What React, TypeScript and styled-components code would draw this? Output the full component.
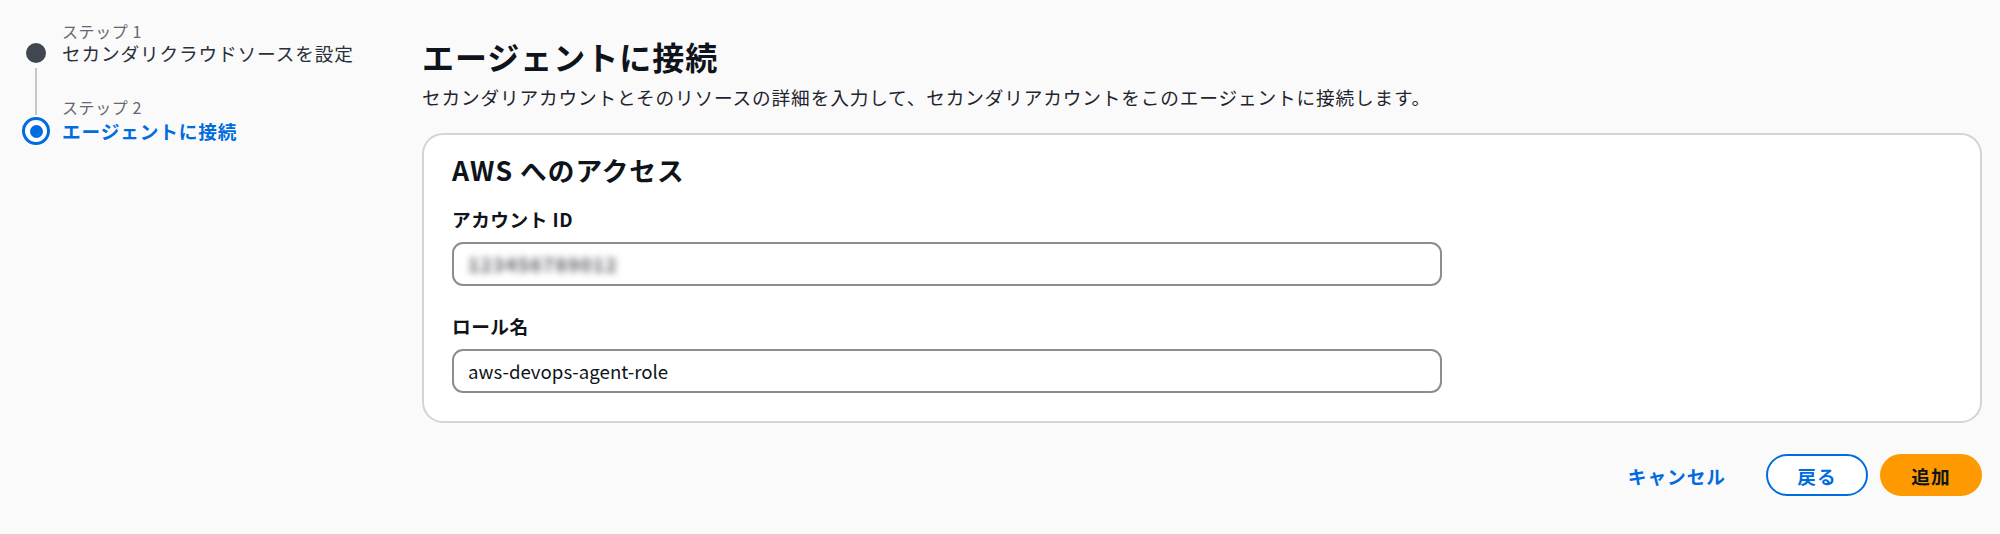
import React from 'react';
import styled, { createGlobalStyle, css } from 'styled-components';

const BLUE = '#006ce0';
const INK = '#0f141a';

const GlobalStyle = createGlobalStyle`
  html, body {
    margin: 0;
    padding: 0;
    background: #fafafa;
  }
  body {
    font-family: "Noto Sans CJK JP", "Open Sans", "Noto Sans", sans-serif;
    color: ${INK};
    -webkit-font-smoothing: antialiased;
  }
`;

const Page = styled.div`
  display: flex;
  gap: 20px;
  padding: 0 18px 0 20px;
  min-height: 534px;
  box-sizing: border-box;
`;

/* ---------- wizard steps ---------- */

const Sidebar = styled.nav`
  flex: 0 0 382px;
  padding-top: 21px;
`;

const Steps = styled.div`
  display: grid;
  grid-template-columns: 32px 1fr;
  grid-template-rows: 20px 24px 52px 28px;
  column-gap: 10px;
`;

const StepCaption = styled.span<{ $row: number }>`
  grid-column: 2;
  grid-row: ${(p) => p.$row};
  align-self: end;
  font-size: 16px;
  line-height: 20px;
  color: #656871;
  letter-spacing: 0.6px;
`;

const StepTitle = styled.span<{ $row: number; $active?: boolean }>`
  grid-column: 2;
  grid-row: ${(p) => p.$row};
  align-self: center;
  font-size: 18.67px;
  line-height: 24px;
  letter-spacing: 0.85px;
  color: #2a303a;
  white-space: nowrap;
  ${(p) =>
    p.$active &&
    css`
      color: ${BLUE};
      font-weight: 700;
    `}
`;

const StepDot = styled.span<{ $row: number; $active?: boolean }>`
  grid-column: 1;
  grid-row: ${(p) => p.$row};
  justify-self: center;
  align-self: center;
  box-sizing: border-box;
  border-radius: 50%;
  width: 20px;
  height: 20px;
  background: #414750;
  ${(p) =>
    p.$active &&
    css`
      width: 28px;
      height: 28px;
      background: #fff;
      border: 3px solid ${BLUE};
      display: flex;
      align-items: center;
      justify-content: center;
      &::after {
        content: '';
        width: 13px;
        height: 13px;
        border-radius: 50%;
        background: ${BLUE};
      }
    `}
`;

const StepLine = styled.span`
  grid-column: 1;
  grid-row: 3;
  justify-self: center;
  width: 2px;
  margin: 3px 0 2px;
  background: #c6c6cd;
`;

/* ---------- main form ---------- */

const Main = styled.main`
  flex: 1;
  display: flex;
  flex-direction: column;
  padding-top: 36px;
`;

const Heading = styled.h1`
  margin: 0;
  font-size: 32px;
  line-height: 40px;
  font-weight: 700;
  letter-spacing: 1px;
  color: ${INK};
`;

const Description = styled.p`
  margin: 8px 0 0;
  font-size: 18.67px;
  line-height: 26px;
  letter-spacing: 0.85px;
  color: #1f252e;
`;

const Card = styled.section`
  margin-top: 23px;
  background: #fff;
  border: 2px solid #d3d3d8;
  border-radius: 21px;
  padding: 18px 28px 28px;
  display: flex;
  flex-direction: column;
`;

const CardTitle = styled.h2`
  margin: 0 0 20px;
  font-size: 26.67px;
  line-height: 34px;
  font-weight: 700;
  letter-spacing: 1px;
`;

const Field = styled.div`
  display: flex;
  flex-direction: column;
  gap: 11px;
  & + & {
    margin-top: 28px;
  }
`;

const Label = styled.label`
  font-size: 18.67px;
  line-height: 24px;
  font-weight: 700;
  letter-spacing: 0.5px;
`;

const TextBox = styled.div`
  box-sizing: border-box;
  width: 990px;
  height: 44px;
  border: 2px solid #8c8c94;
  border-radius: 11px;
  background: #fff;
  padding: 0 14px;
  display: flex;
  align-items: center;
  overflow: hidden;
`;

// account numbers are shown smudged so they can't be read off the form
const Value = styled.span<{ $masked?: boolean }>`
  font-size: 18.67px;
  line-height: 24px;
  color: ${INK};
  ${(p) =>
    p.$masked &&
    css`
      color: #55565e;
      font-weight: 700;
      letter-spacing: 1.5px;
      filter: blur(3.5px);
      user-select: none;
    `}
`;

const Actions = styled.div`
  display: flex;
  justify-content: flex-end;
  align-items: center;
  margin-top: 31px;
`;

const Button = styled.button<{ $variant: 'link' | 'normal' | 'primary' }>`
  box-sizing: border-box;
  height: 42px;
  border-radius: 21px;
  font-family: inherit;
  font-size: 18.67px;
  font-weight: 700;
  letter-spacing: 1px;
  cursor: pointer;
  ${(p) =>
    p.$variant === 'link' &&
    css`
      border: none;
      background: transparent;
      color: ${BLUE};
      padding: 0 20px;
      margin-right: 20px;
    `}
  ${(p) =>
    p.$variant === 'normal' &&
    css`
      width: 102px;
      border: 2px solid ${BLUE};
      background: #fff;
      color: ${BLUE};
      margin-right: 12px;
    `}
  ${(p) =>
    p.$variant === 'primary' &&
    css`
      width: 102px;
      border: 2px solid #ff9900;
      background: #ff9900;
      color: ${INK};
    `}
`;

export default function App() {
  return (
    <>
      <GlobalStyle />
      <Page>
        <Sidebar>
          <Steps>
            <StepCaption $row={1}>ステップ 1</StepCaption>
            <StepDot $row={2} />
            <StepTitle $row={2}>セカンダリクラウドソースを設定</StepTitle>
            <StepLine />
            <StepCaption $row={3}>ステップ 2</StepCaption>
            <StepDot $row={4} $active />
            <StepTitle $row={4} $active>
              エージェントに接続
            </StepTitle>
          </Steps>
        </Sidebar>

        <Main>
          <Heading>エージェントに接続</Heading>
          <Description>
            セカンダリアカウントとそのリソースの詳細を入力して、セカンダリアカウントをこのエージェントに接続します。
          </Description>

          <Card>
            <CardTitle>AWS へのアクセス</CardTitle>
            <Field>
              <Label>アカウント ID</Label>
              <TextBox>
                <Value $masked>123456789012</Value>
              </TextBox>
            </Field>
            <Field>
              <Label>ロール名</Label>
              <TextBox>
                <Value>aws-devops-agent-role</Value>
              </TextBox>
            </Field>
          </Card>

          <Actions>
            <Button $variant="link">キャンセル</Button>
            <Button $variant="normal">戻る</Button>
            <Button $variant="primary">追加</Button>
          </Actions>
        </Main>
      </Page>
    </>
  );
}
